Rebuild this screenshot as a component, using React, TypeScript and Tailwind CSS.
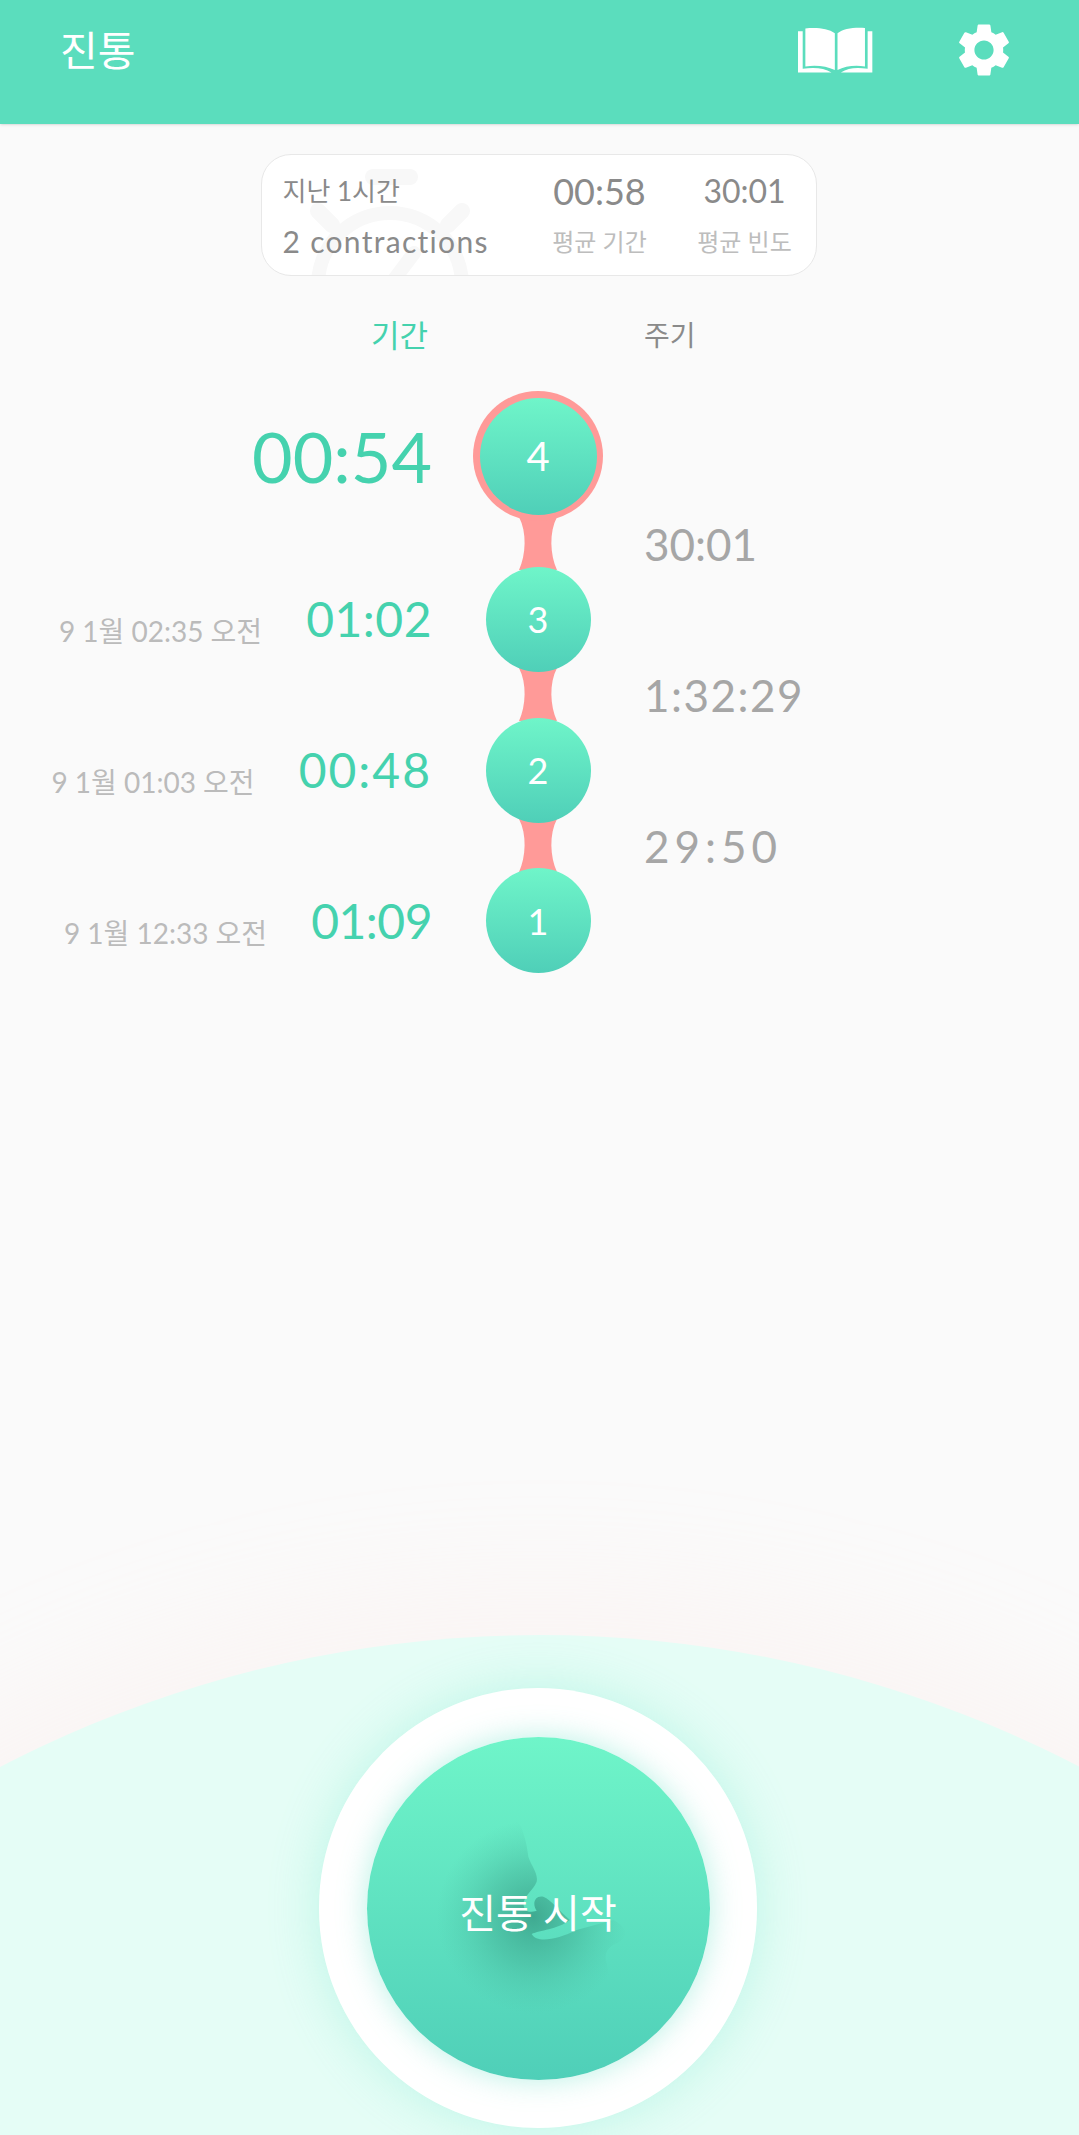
import React from 'react';
import { MdSettings } from 'react-icons/md';

const rows = [
  { n: '4', time: '00:54', timeTrack: '', date: '', next: '30:01', nextTrack: '', current: true },
  { n: '3', time: '01:02', timeTrack: 'tracking-[0.5px]', date: '9 1월 02:35 오전', next: '1:32:29', nextTrack: 'tracking-[1.5px]' },
  { n: '2', time: '00:48', timeTrack: 'tracking-[2px]', date: '9 1월 01:03 오전', next: '29:50', nextTrack: 'tracking-[5px]' },
  { n: '1', time: '01:09', timeTrack: 'tracking-[-0.5px]', date: '9 1월 12:33 오전', next: '', nextTrack: '' },
];

const BookIcon = () => (
  <svg viewBox="90 88 224 136" className="w-[75px] h-[46px]" fill="#fff">
    <path d="M112 92 C145 88 180 92 200 106 V216 C175 204 145 200 112 205 Z" />
    <path d="M290 90 C255 88 225 92 208 106 V216 C230 204 260 200 290 205 Z" />
    <path d="M90 100 H104 V212 C140 207 168 210 190 223 H90 Z" />
    <path d="M312 100 H298 V212 C262 207 240 210 218 223 H312 Z" />
  </svg>
);

const Connector = () => (
  <svg viewBox="0 0 38 53" className="w-[38px] h-[53px] -my-[4px]" fill="#ff9a98">
    <path d="M0 0 H38 C30 15 31 38 38 53 H0 C7 38 8 15 0 0 Z" />
  </svg>
);

// faint stopwatch behind the summary card
const Watermark = () => (
  <svg viewBox="0 0 200 130" className="absolute left-[28px] top-[8px] w-[200px] h-[130px]" fill="none" stroke="#f8f8f8" strokeWidth="14" strokeLinecap="round">
    <path d="M83 14 H120" strokeWidth="16" />
    <circle cx="100" cy="122" r="72" />
    <path d="M42 62 L28 48 M158 62 L172 48" strokeWidth="16" />
    <path d="M100 122 L124 90" />
  </svg>
);

const Silhouette = () => (
  <svg viewBox="0 0 840 840" className="absolute left-[33px] top-[43px] w-[280px] h-[280px]">
    <defs>
      <radialGradient id="shade" gradientUnits="userSpaceOnUse" cx="400" cy="410" r="290">
        <stop offset="0" stopColor="#379c85" stopOpacity="0.8" />
        <stop offset="0.5" stopColor="#3fa88f" stopOpacity="0.4" />
        <stop offset="1" stopColor="#4fbfa5" stopOpacity="0" />
      </radialGradient>
    </defs>
    <path
      fill="url(#shade)"
      d="M340 100 C370 140 380 190 385 230 C395 260 415 280 410 305 C400 330 375 345 370 370 C372 395 385 400 410 392 C395 370 405 345 430 350 C455 360 475 390 510 420 C470 450 420 450 395 462 C410 490 470 480 530 450 L640 420 C680 440 690 470 650 490 C625 500 610 520 620 550 C630 590 635 660 640 760 L60 760 L60 100 Z"
    />
  </svg>
);

export default function App() {
  return (
    <div className="relative flex flex-col w-full h-[2135px] overflow-hidden bg-[#fafafa] font-['Lato','Noto_Sans_CJK_KR',sans-serif]">
      {/* Header */}
      <header className="relative z-10 flex justify-between items-start h-[124px] shrink-0 bg-[#5bddbd] shadow-sm pl-[60px] pr-[63px]">
        <span className="mt-[24px] text-[41px] leading-[54px] text-white">진통</span>
        <div className="flex items-center gap-[79px] mt-[18px]">
          <BookIcon />
          <MdSettings className="text-white" size={64} />
        </div>
      </header>

      {/* Summary card */}
      <div className="relative self-center mt-[30px] -ml-[2px] w-[556px] h-[122px] shrink-0 overflow-hidden rounded-[30px] border border-[#e8e8e8] bg-white text-[#8a8a8a]">
        <Watermark />
        <div className="relative grid grid-cols-[262px_150px_1fr] h-full pl-[21px] pt-[17px]">
          <div className="flex flex-col gap-[12px]">
            <span className="text-[26px] leading-[38px]">지난 1시간</span>
            <span className="text-[30px] leading-[38px] tracking-[1.3px] whitespace-nowrap">2 contractions</span>
          </div>
          <div className="flex flex-col items-center gap-[14px] w-[110px]">
            <span className="text-[36px] leading-[38px]">00:58</span>
            <span className="text-[24px] leading-[36px] text-[#bdbdbd] whitespace-nowrap">평균 기간</span>
          </div>
          <div className="flex flex-col items-center gap-[14px] w-[100px]">
            <span className="text-[32px] leading-[38px]">30:01</span>
            <span className="text-[24px] leading-[36px] text-[#bdbdbd] whitespace-nowrap">평균 빈도</span>
          </div>
        </div>
      </div>

      {/* Column titles */}
      <div className="grid grid-cols-[428px_1fr] gap-x-[216px] mt-[37px] h-[44px] shrink-0 leading-[44px]">
        <span className="text-right text-[31px] text-[#45d2ae]">기간</span>
        <span className="text-[28px] text-[#8a8a8a]">주기</span>
      </div>

      {/* Timeline */}
      <div className="grid grid-cols-[432px_130px_1fr] grid-rows-[130px_45px_106px_45px_106px_45px_105px] gap-x-[41px] mt-[34px] shrink-0">
        {rows.map((r, i) => (
          <React.Fragment key={r.n}>
            <div className="flex items-center justify-end gap-[44px]">
              {r.date && <span className="mt-[24px] text-[28px] text-[#bbbbbb] whitespace-nowrap">{r.date}</span>}
              <span className={`${r.current ? 'text-[70px]' : 'text-[48px]'} leading-none text-[#45d2ae] ${r.timeTrack}`}>{r.time}</span>
            </div>
            <div className="relative z-10 flex items-center justify-center">
              {r.current ? (
                <div className="flex items-center justify-center w-[130px] h-[130px] rounded-full bg-[#ff9a98]">
                  <div className="flex items-center justify-center w-[117px] h-[117px] rounded-full bg-linear-to-b from-[#6ff5c9] to-[#4fcfb8] text-[40px] text-white">{r.n}</div>
                </div>
              ) : (
                <div className="flex items-center justify-center w-[105px] h-[105px] rounded-full bg-linear-to-b from-[#6ff5c9] to-[#4fcfb8] text-[36px] text-white">{r.n}</div>
              )}
            </div>
            <div />
            {i < rows.length - 1 && (
              <>
                <div />
                <div className="flex items-center justify-center">
                  <Connector />
                </div>
                <div className={`flex items-center text-[44px] leading-none text-[#a6a6a6] ${r.nextTrack}`}>{r.next}</div>
              </>
            )}
          </React.Fragment>
        ))}
      </div>

      <div className="flex-1" />

      {/* Start button */}
      <div className="relative flex justify-center h-[575px] shrink-0">
        <div className="absolute left-1/2 -translate-x-1/2 top-[75px] w-[2340px] h-[2340px] rounded-full bg-[#e5fdf6] shadow-[0_0_110px_50px_rgba(255,228,220,0.18)]" />
        <div className="relative flex items-center justify-center mt-[128px] -ml-[3px] w-[438px] h-[440px] rounded-full bg-white shadow-[0_0_50px_rgba(95,230,195,0.3)]">
          <div className="relative flex items-center justify-center w-[343px] h-[343px] rounded-full bg-linear-to-b from-[#6ff5c9] to-[#4fcfb8] shadow-[0_0_30px_rgba(80,220,190,0.4)]">
            <Silhouette />
            <span className="relative mt-[10px] text-[40px] text-white whitespace-nowrap">진통 시작</span>
          </div>
        </div>
      </div>
    </div>
  );
}
